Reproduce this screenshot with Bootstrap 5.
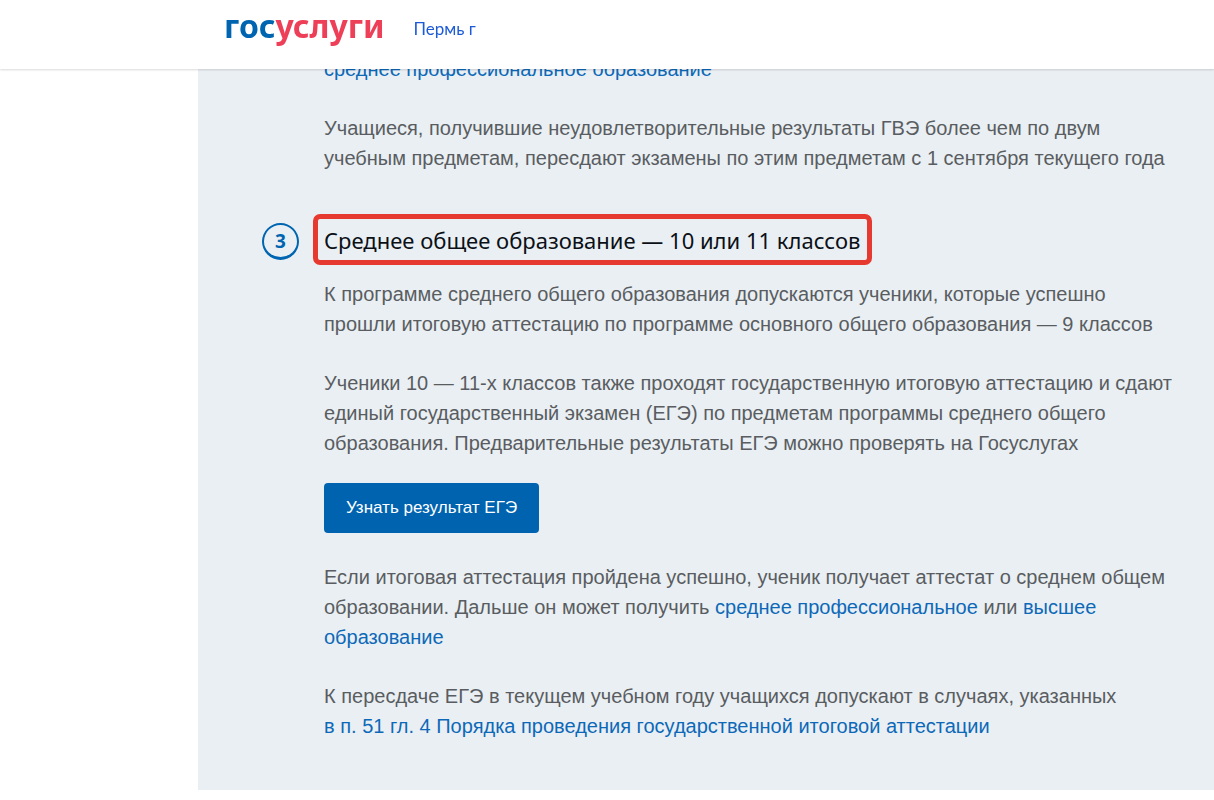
<!DOCTYPE html>
<html lang="ru">
<head>
<meta charset="utf-8">
<meta name="viewport" content="width=device-width, initial-scale=1">
<title>Госуслуги</title>
<link href="https://cdn.jsdelivr.net/npm/bootstrap@5.3.0/dist/css/bootstrap.min.css" rel="stylesheet">
<style>
body { font-family: "Liberation Sans", Arial, sans-serif; font-size: 20px; line-height: 30px; color: #595d61; background: #fff; }
a { color: #0d69b8; text-decoration: none; }
.site-header { height: 69px; padding: 0 0 18px 224px; gap: 29px; box-shadow: 0 1px 2px rgba(0,0,0,.15); }
.brand-name { font: 700 32px/40px "Noto Sans", sans-serif; color: #ee3f58; }
.brand-name span { color: #0065b1; }
.region { padding-top: 6px; font: 400 17px/24px Lato, sans-serif; color: #1d5bd6; }
.content-panel { margin-left: 198px; padding: 54px 40px 49px 126px; background: #eaeff3; }
.content-panel p { margin-bottom: 29px; }
.step-title { gap: 14px; margin: 41px 0 14px -62px; }
.step-number { width: 37px; height: 37px; margin-top: 3px; border: 2px solid #0065b1; border-bottom-width: 3px; color: #0065b1; font: 700 19px/24px "Noto Sans", sans-serif; }
.step-heading { padding: 1px 7px 0 6px; border: 5px solid #e63a30; border-radius: 7px; color: #0b1017; font: 400 22px/40px "Noto Sans", sans-serif; }
.btn-result { height: 50px; padding: 0 22px; margin: -4px 0 29px; background: #0063b0; color: #fff; border: 0; border-radius: 4px; font-size: 17px; }
.btn-result:hover { background: #00559a; color: #fff; }
</style>
</head>
<body>
<header class="site-header fixed-top bg-white d-flex align-items-center">
  <a href="#" class="brand-name"><span>гос</span>услуги</a>
  <a href="#" class="region">Пермь г</a>
</header>
<main class="content-panel">
  <p><a href="#">среднее профессиональное образование</a></p>
  <p>Учащиеся, получившие неудовлетворительные результаты ГВЭ более чем по двум<br>учебным предметам, пересдают экзамены по этим предметам с 1 сентября текущего года</p>
  <div class="step-title d-flex align-items-center">
    <span class="step-number rounded-circle d-flex align-items-center justify-content-center flex-shrink-0">3</span>
    <h2 class="step-heading mb-0">Среднее общее образование — 10 или 11 классов</h2>
  </div>
  <p>К программе среднего общего образования допускаются ученики, которые успешно<br>прошли итоговую аттестацию по программе основного общего образования — 9 классов</p>
  <p>Ученики 10 — 11-х классов также проходят государственную итоговую аттестацию и сдают<br>единый государственный экзамен (ЕГЭ) по предметам программы среднего общего<br>образования. Предварительные результаты ЕГЭ можно проверять на Госуслугах</p>
  <button type="button" class="btn btn-result d-block">Узнать результат ЕГЭ</button>
  <p>Если итоговая аттестация пройдена успешно, ученик получает аттестат о среднем общем<br>образовании. Дальше он может получить <a href="#">среднее профессиональное</a> или <a href="#">высшее<br>образование</a></p>
  <p class="mb-0">К пересдаче ЕГЭ в текущем учебном году учащихся допускают в случаях, указанных<br><a href="#">в п. 51 гл. 4 Порядка проведения государственной итоговой аттестации</a></p>
</main>
<script src="https://cdn.jsdelivr.net/npm/bootstrap@5.3.0/dist/js/bootstrap.bundle.min.js"></script>
</body>
</html>
